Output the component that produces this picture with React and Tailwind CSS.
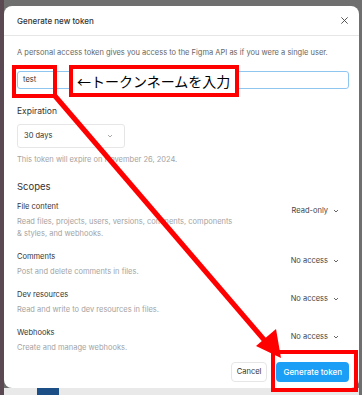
import React from "react";

const scopes = [
  {
    name: "File content",
    desc: ["Read files, projects, users, versions, comments, components", "& styles, and webhooks."],
    value: "Read-only",
  },
  { name: "Comments", desc: ["Post and delete comments in files."], value: "No access" },
  { name: "Dev resources", desc: ["Read and write to dev resources in files."], value: "No access" },
  { name: "Webhooks", desc: ["Create and manage webhooks."], value: "No access" },
];

const Chevron = ({ className }) => (
  <svg viewBox="0 0 8 8" className={className} fill="none" stroke="currentColor" strokeWidth="1">
    <path d="M2 3l2 2 2-2" />
  </svg>
);

const ScopeRow = ({ name, desc, value }) => (
  <div className="flex items-start justify-between">
    <div>
      <p className="text-[7.5px] leading-[12px] text-[#333]">{name}</p>
      <div className="mt-[3px]">
        {desc.map((line) => (
          <p key={line} className="text-[7.5px] leading-[12px] text-[#a3a3a3]">
            {line}
          </p>
        ))}
      </div>
    </div>
    <div className="mt-[4px] mr-[6px] flex items-center gap-[4px] text-[7.5px] text-[#444]">
      {value}
      <Chevron className="h-[8px] w-[8px] text-[#666]" />
    </div>
  </div>
);

export default function App() {
  return (
    <div
      className="relative h-[395px] w-[362px] overflow-hidden bg-[#6f6f6f]"
      style={{ fontFamily: "Inter, 'Noto Sans', sans-serif" }}
    >
      <div className="flex h-full">
        <div className="w-[4px] bg-[#5a4853]" />
        <div className="flex flex-1 flex-col pt-[6px] pr-[3px]">
          <div className="h-[382px] rounded-[8px] bg-white">
            <div className="flex h-[30px] items-center justify-between border-b border-[#e6e6e6] pl-[13px] pr-[10px]">
              <span className="text-[8px] font-medium text-[#333]">Generate new token</span>
              <svg viewBox="0 0 10 10" className="h-[9px] w-[9px] text-[#444]" stroke="currentColor" strokeWidth="1">
                <path d="M1.5 1.5l7 7M8.5 1.5l-7 7" />
              </svg>
            </div>
            <div className="pl-[13px] pr-[10px]">
              <p className="mt-[12px] text-[7.5px] leading-[10px] text-[#666]">
                A personal access token gives you access to the Figma API as if you were a single user.
              </p>
              <div className="mt-[13px] flex h-[18px] items-center rounded-[3px] border border-[#8fc6f0] pl-[5px] text-[7.5px] text-[#333]">
                test
              </div>
              <p className="mt-[16px] text-[8.5px] text-[#333]">Expiration</p>
              <div className="mt-[6px] flex h-[24px] w-[108px] items-center justify-between rounded-[3px] border border-[#e6e6e6] pl-[6px] pr-[10px] text-[7.5px] text-[#333]">
                30 days
                <Chevron className="h-[8px] w-[8px] text-[#aaa]" />
              </div>
              <p className="mt-[6px] text-[7.5px] leading-[12px] text-[#a3a3a3]">
                This token will expire on November 26, 2024.
              </p>
              <p className="mt-[14px] text-[9.5px] text-[#333]">Scopes</p>
              <div className="mt-[7px] flex flex-col gap-[11px] pr-[3px]">
                {scopes.map((s) => (
                  <ScopeRow key={s.name} {...s} />
                ))}
              </div>
              <div className="mt-[8px] flex justify-end gap-[9px]">
                <button className="h-[20px] rounded-[4px] border border-[#e6e6e6] px-[5px] text-[7.5px] text-[#333]">
                  Cancel
                </button>
                <button className="h-[20px] rounded-[4px] bg-[#1b9ef6] px-[7px] text-[8px] font-medium text-white">
                  Generate token
                </button>
              </div>
            </div>
          </div>
          <div className="flex flex-1 items-center gap-[2px] bg-[#e9e9e9] pl-[33px]">
            <div className="h-full w-[22px] bg-[#1c4f86]" />
          </div>
        </div>
      </div>

      {/* annotations */}
      <div className="absolute left-[12px] top-[65px] h-[33px] w-[45px] border-[4px] border-[#ff0000]" />
      <div
        className="absolute left-[69px] top-[65px] flex h-[32px] w-[170px] items-center whitespace-nowrap border-[4px] border-[#ff0000] bg-white pl-[4px] text-[14px] text-black"
        style={{ fontFamily: "'Noto Sans CJK JP', sans-serif" }}
      >
        ←トークンネームを入力
      </div>
      <div className="absolute left-[271px] top-[350px] h-[42px] w-[87px] border-[4px] border-[#ff0000]" />
      <svg className="pointer-events-none absolute left-0 top-0" width="362" height="395">
        <line x1="55" y1="96" x2="266" y2="342" stroke="#ff0000" strokeWidth="5" />
        <polygon points="281,358 256,346 276,329" fill="#ff0000" />
      </svg>
    </div>
  );
}
